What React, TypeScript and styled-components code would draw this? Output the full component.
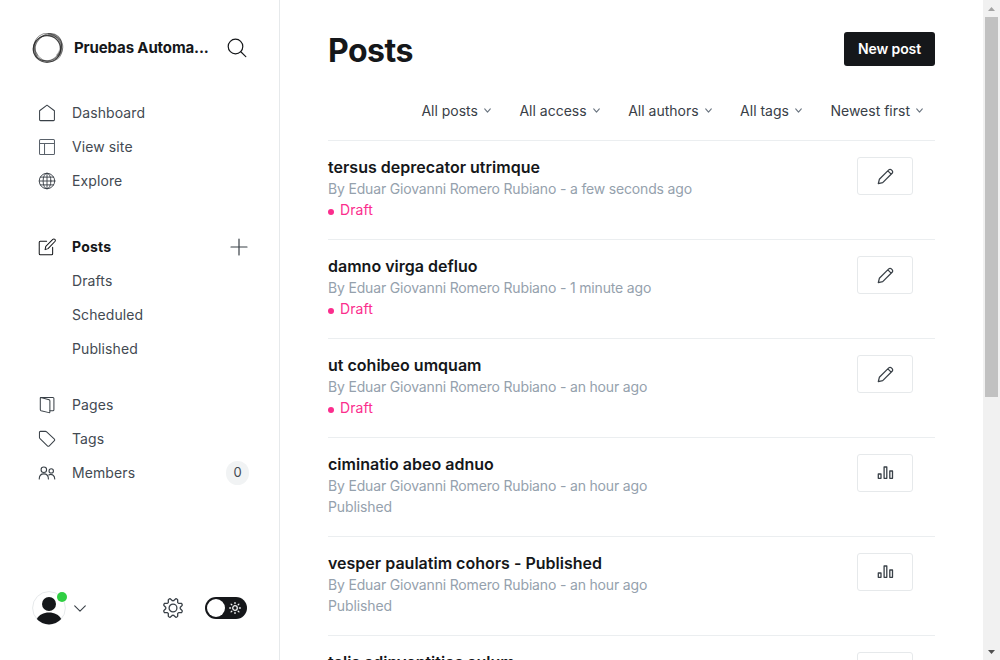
import React from 'react';
import styled, { createGlobalStyle, css } from 'styled-components';

const GlobalStyle = createGlobalStyle`
  * { box-sizing: border-box; }
  html, body { margin: 0; height: 100%; overflow: hidden; background: #fff; }
  body { font-family: Inter, "Liberation Sans", sans-serif; font-size: 14px; color: #15171a; }
  button { font-family: inherit; margin: 0; padding: 0; border: 0; background: none; }
  svg { display: block; flex: none; }
`;

const Shell = styled.div`
  display: grid;
  grid-template-columns: 280px 1fr 17px;
  height: 660px;
  overflow: hidden;
`;

const Sidebar = styled.nav`
  display: flex;
  flex-direction: column;
  border-right: 1px solid #e6e9eb;
  padding: 30px 30px 34px 32px;
`;

const Brand = styled.header`
  display: flex;
  align-items: center;
  height: 36px;
  margin-bottom: 30px;
`;

const BrandName = styled.div`
  margin-left: 10px;
  width: 140px;
  font-size: 15px;
  line-height: 20px;
  font-weight: 700;
  letter-spacing: -0.13px;
  white-space: nowrap;
`;

const SearchButton = styled.button`
  margin-left: auto;
  padding-right: 2px;
`;

const NavGroup = styled.ul<{ $gap: number }>`
  list-style: none;
  margin: 0 0 ${p => p.$gap}px;
  padding: 0;
`;

const NavItem = styled.li<{ $active?: boolean }>`
  display: flex;
  align-items: center;
  height: 34px;
  padding-left: 6px;
  color: ${p => (p.$active ? '#15171a' : '#434a52')};
  font-weight: ${p => (p.$active ? 700 : 400)};
  letter-spacing: ${p => (p.$active ? 0.2 : 0.1)}px;
`;

const NavLabel = styled.span`
  padding-bottom: 2px;
`;

const IconSlot = styled.span`
  width: 34px;
  height: 18px;
  flex: none;
`;

const Trailing = styled.span`
  margin-left: auto;
`;

const Badge = styled.span`
  margin-left: auto;
  width: 23px;
  height: 24px;
  border-radius: 12px;
  background: #f1f3f4;
  line-height: 23px;
  font-size: 13px;
  letter-spacing: 0;
  text-align: center;
`;

const UserBar = styled.footer`
  display: flex;
  align-items: center;
  margin-top: auto;
  height: 36px;
`;

const Avatar = styled.div`
  position: relative;
  width: 34px;
  height: 34px;
`;

const OnlineDot = styled.span`
  position: absolute;
  top: 1px;
  right: -1px;
  width: 10px;
  height: 10px;
  border-radius: 50%;
  background: #30cf43;
`;

const MenuArrow = styled.span`
  margin-left: 8px;
`;

const SettingsLink = styled.span`
  margin-left: auto;
`;

const ThemeSwitch = styled.span`
  display: flex;
  align-items: center;
  justify-content: space-between;
  width: 42px;
  height: 22px;
  margin: 0 2px 0 21px;
  padding: 0 6px 0 2px;
  border-radius: 11px;
  background: #15171a;
`;

const Knob = styled.span`
  width: 18px;
  height: 18px;
  border-radius: 50%;
  background: #fff;
`;

const Main = styled.main`
  padding: 32px 48px 0;
  overflow: hidden;
`;

const TitleBar = styled.header`
  display: flex;
  align-items: center;
  justify-content: space-between;
  height: 34px;
`;

const Heading = styled.h1`
  margin: 3px 0 0;
  font-size: 32px;
  line-height: 36px;
  font-weight: 700;
  letter-spacing: -0.5px;
`;

const NewPost = styled.button`
  width: 91px;
  height: 34px;
  padding-bottom: 1px;
  border-radius: 3px;
  background: #15171a;
  color: #fff;
  font-size: 14px;
  font-weight: 600;
  letter-spacing: -0.1px;
`;

const Filters = styled.div`
  display: flex;
  justify-content: flex-end;
  gap: 28.5px;
  height: 75px;
  padding: 34px 12px 0 0;
  border-bottom: 1px solid #ebeef0;
`;

const Filter = styled.div`
  display: flex;
  align-items: center;
  gap: 6px;
  height: 20px;
  color: #394047;
  white-space: nowrap;
`;

const PostRow = styled.article`
  display: flex;
  justify-content: space-between;
  height: 99px;
  padding: 16px 22px 0 0;
  border-bottom: 1px solid #ebeef0;
`;

const PostTitle = styled.h3`
  margin: -1px 0 0;
  font-size: 16px;
  line-height: 22px;
  font-weight: 600;
  letter-spacing: 0.01px;
  white-space: nowrap;
`;

const lineText = css`
  font-size: 14px;
  line-height: 21px;
  white-space: nowrap;
`;

const Meta = styled.p`
  ${lineText}
  margin: 0;
  letter-spacing: -0.17px;
  color: #95a1ad;
`;

const Status = styled.p<{ $draft: boolean }>`
  ${lineText}
  display: flex;
  align-items: center;
  gap: 6px;
  margin: 0;
  letter-spacing: ${p => (p.$draft ? 0.1 : -0.1)}px;
  color: ${p => (p.$draft ? '#fb2d8d' : '#95a1ad')};
`;

const StatusDot = styled.span`
  width: 6px;
  height: 6px;
  margin-top: 4px;
  border-radius: 50%;
  background: #fb2d8d;
`;

const RowAction = styled.button`
  display: flex;
  align-items: center;
  justify-content: center;
  width: 56px;
  height: 38px;
  padding-left: 1px;
  border: 1px solid #e6e9eb;
  border-radius: 3px;
`;

const Scrollbar = styled.div`
  display: flex;
  flex-direction: column;
  justify-content: space-between;
  align-items: center;
  background: #f1f1f1;
`;

const Thumb = styled.div`
  width: 13px;
  height: 380px;
  margin-bottom: auto;
  background: #c1c1c1;
`;

const ScrollArrow = styled.div`
  display: flex;
  align-items: center;
  justify-content: center;
  width: 17px;
  height: 17px;
`;

const Glyph = ({ size = 18, box = 25.5, width = 1.45, color = '#394047', children }: {
  size?: number; box?: number; width?: number; color?: string; children: React.ReactNode;
}) => {
  const origin = box === 25.5 ? -0.75 : 0;
  return (
    <svg width={size} height={size} viewBox={`${origin} ${origin} ${box} ${box}`} fill="none" stroke={color}
      strokeWidth={width} strokeLinecap="round" strokeLinejoin="round">{children}</svg>
  );
};

const Chevron = ({ w, h, color }: { w: number; h: number; color: string }) => (
  <svg width={w} height={h} viewBox={`0 0 ${w} ${h}`} fill="none" stroke={color} strokeWidth="1.1" strokeLinecap="round" strokeLinejoin="round">
    <path d={`M.7 .8 L${w / 2} ${h - 0.8} L${w - 0.7} .8`} />
  </svg>
);

const Logo = () => (
  <svg width="32" height="32" viewBox="0 0 32 32" fill="none" stroke="#222">
    <ellipse cx="15" cy="17" rx="13.700" ry="13.300" strokeWidth="1.200" opacity=".8" />
    <ellipse cx="16.700" cy="15.700" rx="14.700" ry="12.300" strokeWidth="1.100" opacity=".6" transform="rotate(-48 16 16)" />
    <ellipse cx="16" cy="16" rx="14.900" ry="12.800" strokeWidth="1" opacity=".5" transform="rotate(-15 16 16)" />
    <ellipse cx="15.800" cy="15.500" rx="14.800" ry="13.200" strokeWidth=".9" opacity=".5" transform="rotate(50 16 16)" />
    <path d="M16 2.500c6.500 0 12 4.600 12.900 11.500.2 4-1.300 7.400-3.900 10" strokeWidth="2.800" opacity=".35" />
    <path d="M4 8.500C1.800 13 2 19 5.500 24" strokeWidth="2" opacity=".3" />
  </svg>
);

const icons: Record<string, React.ReactNode> = {
  Dashboard: <Glyph><path d="M1.500 8.800 12 .9l10.500 7.900v12.700a1.300 1.300 0 0 1-1.300 1.300H2.800a1.300 1.300 0 0 1-1.300-1.300z" /></Glyph>,
  'View site': <Glyph color="#59616a"><rect x="1.400" y="1.400" width="21.200" height="21.200" rx="1.500" /><path d="M1.400 7.200h21.200M8.500 7.200v15.400" /></Glyph>,
  Explore: <Glyph width={1.3}><circle cx="12" cy="12" r="11" /><ellipse cx="12" cy="12" rx="5.500" ry="11" /><path d="M12 1v22M1 12h22M2.600 6.500h18.800M2.600 17.500h18.800" /></Glyph>,
  Posts: <Glyph color="#15171a"><path d="M11.500 4H2.400A1.400 1.400 0 0 0 1 5.400v16.200A1.400 1.400 0 0 0 2.400 23h16.200a1.400 1.400 0 0 0 1.400-1.400v-9.100" /><path d="m9.300 15.700 1-4.600L20.200 1.200a2.100 2.100 0 0 1 3 0 2.100 2.100 0 0 1 0 3L13.500 14.300z" /></Glyph>,
  Pages: <Glyph><path d="M3.300 1.500 15 4.700a1.500 1.500 0 0 1 1.100 1.500v15.600a1 1 0 0 1-1.300 1L3.600 20a1.500 1.500 0 0 1-1.100-1.500V2.100a.7.700 0 0 1 .8-.6z" /><path d="M3.300 1.300h17a1.500 1.500 0 0 1 1.500 1.500v15.900a1.500 1.500 0 0 1-1.500 1.500h-4.200" /></Glyph>,
  Tags: <Glyph><path d="M1.300 2.500A1.300 1.300 0 0 1 2.600 1.200h7.200a2.500 2.500 0 0 1 1.700.7l11 10.400a1.400 1.400 0 0 1 0 2L14.900 22a1.400 1.400 0 0 1-2 0L2.100 11.500a2.500 2.500 0 0 1-.8-1.700z" /></Glyph>,
  Members: <Glyph width={1.55}><circle cx="7.500" cy="7.500" r="3.900" /><circle cx="18" cy="9" r="3.100" /><path d="M1 20.500c0-4.300 2.800-7.200 6.500-7.200s6.500 2.900 6.500 7.200M14.500 14.800c4-2.200 8.500.5 8.500 5.700" /></Glyph>,
};

const Pencil = () => (
  <Glyph size={17} width={1.9}><path d="M1.200 22.800 2.800 16.200 16.900 2.100a2.700 2.700 0 0 1 3.900 0l1.100 1.100a2.700 2.700 0 0 1 0 3.900L7.800 21.200zM15.500 3.500l5 5" /></Glyph>
);

const Stats = () => (
  <svg width="17" height="16" viewBox="0 0 17 16" fill="none" stroke="#394047" strokeWidth="1.300" strokeLinejoin="round">
    <rect x="1.300" y="9" width="2.700" height="4.300" /><rect x="7.100" y="2" width="2.700" height="11.300" /><rect x="12.800" y="6" width="2.700" height="7.300" />
  </svg>
);

const Gear = () => {
  const pts = Array.from({ length: 64 }, (_, i) => {
    const a = (i / 64) * Math.PI * 2;
    const r = 8.500 - 1.300 * Math.tanh(2.2 * Math.cos(8 * a));
    return `${(11 + r * Math.sin(a)).toFixed(2)},${(11 - r * Math.cos(a)).toFixed(2)}`;
  }).join(' ');
  return <Glyph size={22} box={22} width={1.300}><polygon points={pts} /><circle cx="11" cy="11" r="3.900" /></Glyph>;
};

const Sun = () => (
  <Glyph size={12} box={12} width={1.300} color="#f0f1f2">
    <circle cx="6" cy="6" r="2.300" />
    <path d="M6 .6v1M6 10.400v1M.6 6h1M10.400 6h1M2.100 2.100l.7.700M9.200 9.200l.7.700M2.100 9.900l.7-.7M9.200 2.800l.7-.7" />
  </Glyph>
);

const Person = () => (
  <svg width="34" height="34" viewBox="0 0 34 34">
    <circle cx="17" cy="17" r="16.400" fill="#fff" stroke="#e6e9eb" />
    <circle cx="17" cy="13" r="7" fill="#15171a" />
    <path d="M4.800 28C7 23.700 11.500 21.500 17 21.500S27 23.700 29.200 28A16.500 16.500 0 0 1 4.800 28z" fill="#15171a" />
  </svg>
);

const Item = ({ name, children }: { name: string; children?: React.ReactNode }) => (
  <NavItem $active={name === 'Posts'}><IconSlot>{icons[name]}</IconSlot><NavLabel>{name}</NavLabel>{children}</NavItem>
);

const posts = [
  { title: 'tersus deprecator utrimque', time: 'a few seconds ago', draft: true },
  { title: 'damno virga defluo', time: '1 minute ago', draft: true },
  { title: 'ut cohibeo umquam', time: 'an hour ago', draft: true },
  { title: 'ciminatio abeo adnuo', time: 'an hour ago', draft: false },
  { title: 'vesper paulatim cohors - Published', time: 'an hour ago', draft: false },
  { title: 'talis adinventitias aulum', time: 'an hour ago', draft: false },
];

export default function App() {
  return (
    <>
      <GlobalStyle />
      <Shell>
        <Sidebar>
          <Brand>
            <Logo />
            <BrandName>Pruebas Automa...</BrandName>
            <SearchButton aria-label="Search">
              <Glyph size={20} box={20} width={1.200} color="#15171a"><circle cx="8.500" cy="8.500" r="7.300" /><path d="m13.800 13.800 5 4.800" /></Glyph>
            </SearchButton>
          </Brand>
          <NavGroup $gap={32}>
            <Item name="Dashboard" /><Item name="View site" /><Item name="Explore" />
          </NavGroup>
          <NavGroup $gap={22}>
            <Item name="Posts">
              <Trailing><Glyph size={20} box={20} width={1.200}><path d="M10 2v16M2 10h16" /></Glyph></Trailing>
            </Item>
            <Item name="Drafts" /><Item name="Scheduled" /><Item name="Published" />
          </NavGroup>
          <NavGroup $gap={0}>
            <Item name="Pages" /><Item name="Tags" />
            <Item name="Members"><Badge>0</Badge></Item>
          </NavGroup>
          <UserBar>
            <Avatar><Person /><OnlineDot /></Avatar>
            <MenuArrow><Chevron w={12} h={7} color="#394047" /></MenuArrow>
            <SettingsLink><Gear /></SettingsLink>
            <ThemeSwitch><Knob /><Sun /></ThemeSwitch>
          </UserBar>
        </Sidebar>
        <Main>
          <TitleBar>
            <Heading>Posts</Heading>
            <NewPost>New post</NewPost>
          </TitleBar>
          <Filters>
            {['All posts', 'All access', 'All authors', 'All tags', 'Newest first'].map(f => (
              <Filter key={f}>{f}<Chevron w={7} h={5} color="#6b7580" /></Filter>
            ))}
          </Filters>
          {posts.map(p => (
            <PostRow key={p.title}>
              <div>
                <PostTitle>{p.title}</PostTitle>
                <Meta>By Eduar Giovanni Romero Rubiano - {p.time}</Meta>
                <Status $draft={p.draft}>{p.draft && <StatusDot />}{p.draft ? 'Draft' : 'Published'}</Status>
              </div>
              <RowAction aria-label={p.draft ? 'Edit' : 'Analytics'}>{p.draft ? <Pencil /> : <Stats />}</RowAction>
            </PostRow>
          ))}
        </Main>
        <Scrollbar>
          <ScrollArrow><svg width="7" height="4"><path d="M0 4 3.500 0 7 4z" fill="#a3a3a3" /></svg></ScrollArrow>
          <Thumb />
          <ScrollArrow><svg width="7" height="4"><path d="M0 0h7L3.500 4z" fill="#505050" /></svg></ScrollArrow>
        </Scrollbar>
      </Shell>
    </>
  );
}
